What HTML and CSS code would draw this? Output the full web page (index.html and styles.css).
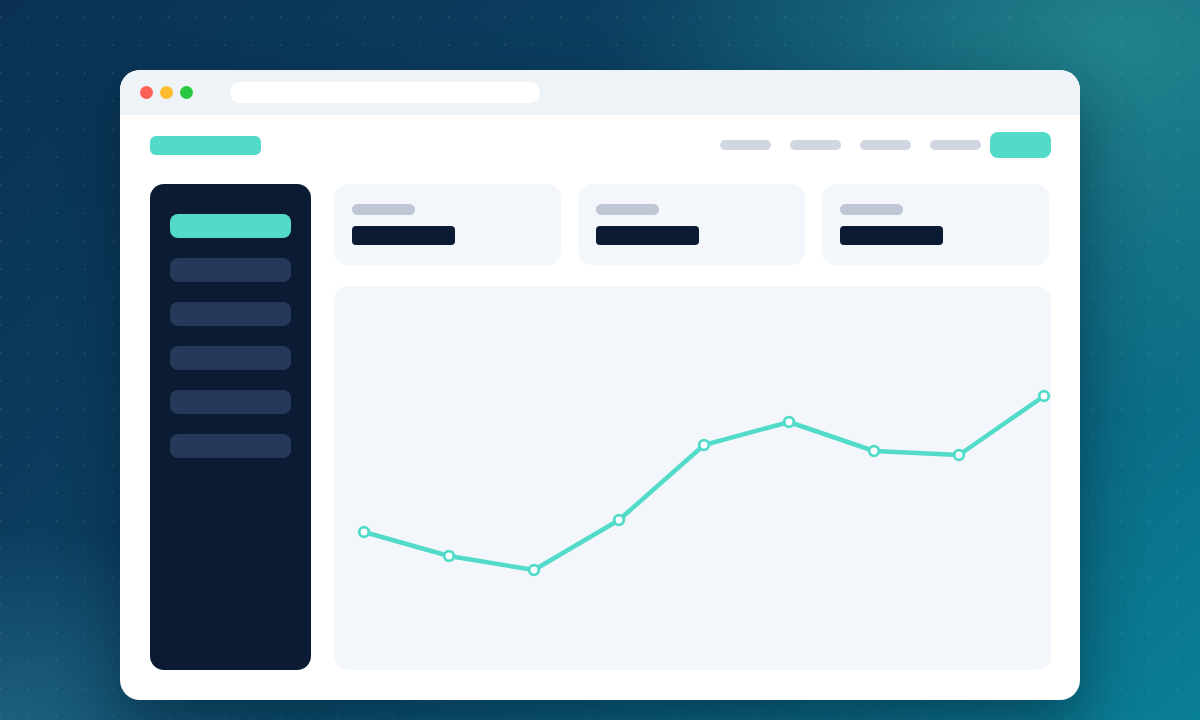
FILE: index.html
```html
<!DOCTYPE html>
<html lang="en">
<head>
<meta charset="utf-8">
<title>Dashboard</title>
<link rel="stylesheet" href="styles.css">
</head>
<body>
<div class="stage">
  <div class="window">
    <div class="titlebar">
      <div class="lights">
        <span class="light red"></span>
        <span class="light yellow"></span>
        <span class="light green"></span>
      </div>
      <div class="address"></div>
    </div>
    <div class="app">
      <header class="topbar">
        <div class="logo"></div>
        <nav class="nav">
          <span class="nav-item"></span>
          <span class="nav-item"></span>
          <span class="nav-item"></span>
          <span class="nav-item"></span>
          <span class="nav-btn"></span>
        </nav>
      </header>
      <div class="content">
        <aside class="sidebar">
          <span class="side-item active"></span>
          <span class="side-item"></span>
          <span class="side-item"></span>
          <span class="side-item"></span>
          <span class="side-item"></span>
          <span class="side-item"></span>
        </aside>
        <main class="main">
          <div class="cards">
            <div class="card"><span class="card-label"></span><span class="card-value"></span></div>
            <div class="card"><span class="card-label"></span><span class="card-value"></span></div>
            <div class="card"><span class="card-label"></span><span class="card-value"></span></div>
          </div>
          <div class="chart">
            <svg class="chart-svg" viewBox="0 0 717 384" width="717" height="384">
              <polyline class="line" points="30,246 115,270 200,284 285,234 370,159 455,136 540,165 625,169 710,110"/>
              <circle class="pt" cx="30" cy="246" r="4.8"/>
              <circle class="pt" cx="115" cy="270" r="4.8"/>
              <circle class="pt" cx="200" cy="284" r="4.8"/>
              <circle class="pt" cx="285" cy="234" r="4.8"/>
              <circle class="pt" cx="370" cy="159" r="4.8"/>
              <circle class="pt" cx="455" cy="136" r="4.8"/>
              <circle class="pt" cx="540" cy="165" r="4.8"/>
              <circle class="pt" cx="625" cy="169" r="4.8"/>
              <circle class="pt" cx="710" cy="110" r="4.8"/>
            </svg>
          </div>
        </main>
      </div>
    </div>
  </div>
</div>
</body>
</html>
```

FILE: styles.css
```css
* { box-sizing: border-box; }
html, body { margin: 0; padding: 0; }
body {
  width: 1200px;
  height: 720px;
  overflow: hidden;
  font-family: "Inter", "Liberation Sans", sans-serif;
}
.stage {
  width: 1200px;
  height: 720px;
  padding: 70px 120px 20px 120px;
  background:
    radial-gradient(circle, rgba(255,255,255,0.07) 1px, transparent 1.6px) 15px 3px / 28px 28px,
    radial-gradient(ellipse 520px 380px at 1120px 40px, rgba(40,145,148,0.75), rgba(40,145,148,0.3) 55%, transparent 100%),
    radial-gradient(ellipse 380px 260px at 0px 720px, rgba(55,140,165,0.4), transparent 75%),
    linear-gradient(135deg, #0a3152 0%, #0b3f60 35%, #0b5c78 65%, #0a8096 100%);
}
.window {
  width: 960px;
  height: 630px;
  background: #ffffff;
  border-radius: 20px;
  overflow: hidden;
  display: flex;
  flex-direction: column;
  box-shadow: 0 24px 60px rgba(2, 20, 40, 0.45);
}
.titlebar {
  height: 45px;
  background: #eef3f8;
  display: flex;
  align-items: center;
  padding-left: 20px;
  gap: 37px;
  flex-shrink: 0;
}
.lights { display: flex; gap: 7px; }
.light { width: 13px; height: 13px; border-radius: 50%; display: block; }
.red { background: #fe5f57; }
.yellow { background: #febc2e; }
.green { background: #28c840; }
.address {
  width: 310px;
  height: 21px;
  background: #ffffff;
  border-radius: 10px;
}
.app {
  flex: 1;
  padding: 17px 29px 30px 30px;
  display: flex;
  flex-direction: column;
}
.topbar {
  height: 26px;
  display: flex;
  align-items: center;
  justify-content: space-between;
}
.logo {
  width: 111px;
  height: 19px;
  border-radius: 6px;
  background: #52dbc9;
  margin-top: 1px;
}
.nav { display: flex; align-items: center; gap: 19px; }
.nav-item {
  display: block;
  width: 51px;
  height: 10px;
  border-radius: 5px;
  background: #d0d6e2;
}
.nav-btn {
  display: block;
  width: 61px;
  height: 26px;
  border-radius: 8px;
  background: #52dbc9;
  margin-left: -10px;
}
.content {
  flex: 1;
  margin-top: 26px;
  display: flex;
  gap: 23px;
}
.sidebar {
  width: 161px;
  background: #0c1b34;
  border-radius: 14px;
  padding: 30px 20px;
  display: flex;
  flex-direction: column;
  gap: 20px;
}
.side-item {
  display: block;
  height: 24px;
  border-radius: 8px;
  background: #263959;
}
.side-item.active { background: #52dbc9; }
.main {
  flex: 1;
  display: flex;
  flex-direction: column;
  gap: 21px;
}
.cards {
  display: grid;
  grid-template-columns: repeat(3, 227px);
  gap: 17px;
}
.card {
  height: 81px;
  background: #f3f7fb;
  border-radius: 14px;
  padding: 20px 18px;
  display: flex;
  flex-direction: column;
  gap: 11px;
}
.card-label {
  display: block;
  width: 63px;
  height: 11px;
  border-radius: 6px;
  background: #bfc7d6;
}
.card-value {
  display: block;
  width: 103px;
  height: 20px;
  border-radius: 4px;
  background: #0c1b34;
}
.chart {
  flex: 1;
  background: #f3f7fb;
  border-radius: 14px;
  overflow: hidden;
}
.chart-svg { display: block; }
.line {
  fill: none;
  stroke: #52dbc9;
  stroke-width: 4.5;
  stroke-linejoin: round;
  stroke-linecap: round;
}
.pt {
  fill: #ffffff;
  stroke: #52dbc9;
  stroke-width: 2.8;
}
```
